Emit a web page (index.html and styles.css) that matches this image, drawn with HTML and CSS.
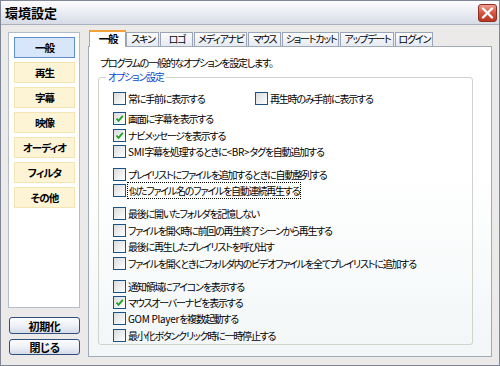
FILE: index.html
```html
<!DOCTYPE html>
<html lang="ja">
<head>
<meta charset="utf-8">
<title>環境設定</title>
<link rel="stylesheet" href="styles.css">
</head>
<body>
<div class="window">
  <div class="titlebar">
    <span class="title">環境設定</span>
    <span class="close"><svg width="13" height="12" viewBox="0 0 13 12"><path d="M2 1.5 L11 10.5 M11 1.5 L2 10.5" stroke="#fff" stroke-width="2.4" stroke-linecap="round"/></svg></span>
  </div>
  <div class="body">
    <div class="side">
      <div class="menu">
        <div class="mbtn active">一般</div>
        <div class="mbtn">再生</div>
        <div class="mbtn">字幕</div>
        <div class="mbtn">映像</div>
        <div class="mbtn">オーディオ</div>
        <div class="mbtn">フィルタ</div>
        <div class="mbtn">その他</div>
      </div>
      <button class="btn btn-init">初期化</button>
      <button class="btn btn-close">閉じる</button>
    </div>
    <div class="main">
      <div class="tabs">
        <div class="tab active">一般</div>
        <div class="tab">スキン</div>
        <div class="tab">ロゴ</div>
        <div class="tab">メディアナビ</div>
        <div class="tab">マウス</div>
        <div class="tab">ショートカット</div>
        <div class="tab">アップデート</div>
        <div class="tab">ログイン</div>
      </div>
      <div class="panel">
        <p class="desc">プログラムの一般的なオプションを設定します。</p>
        <fieldset class="group">
          <legend>オプション設定</legend>
          <div class="sec">
            <div class="row">
              <label class="item wide"><span class="cb"></span><span>常に手前に表示する</span></label>
              <label class="item"><span class="cb"></span><span>再生時のみ手前に表示する</span></label>
            </div>
          </div>
          <div class="sec first-gap">
            <div class="row"><label class="item"><span class="cb on"><svg viewBox="0 0 11 11"><path d="M2.5 5.5 L4.5 7.8 L8.8 2.8" fill="none" stroke="#21a121" stroke-width="1.8"/></svg></span><span>画面に字幕を表示する</span></label></div>
            <div class="row"><label class="item"><span class="cb on"><svg viewBox="0 0 11 11"><path d="M2.5 5.5 L4.5 7.8 L8.8 2.8" fill="none" stroke="#21a121" stroke-width="1.8"/></svg></span><span>ナビメッセージを表示する</span></label></div>
            <div class="row"><label class="item"><span class="cb"></span><span><span class="lat">SMI</span>字幕を処理するときに<span class="lat">&lt;BR&gt;</span>タグを自動追加する</span></label></div>
          </div>
          <div class="sec">
            <div class="row"><label class="item"><span class="cb"></span><span>プレイリストにファイルを追加するときに自動整列する</span></label></div>
            <div class="row"><label class="item"><span class="cb"></span><span class="focus">似たファイル名のファイルを自動連続再生する</span></label></div>
          </div>
          <div class="sec">
            <div class="row"><label class="item"><span class="cb"></span><span>最後に開いたフォルダを記憶しない</span></label></div>
            <div class="row"><label class="item"><span class="cb"></span><span>ファイルを開く時に前回の再生終了シーンから再生する</span></label></div>
            <div class="row"><label class="item"><span class="cb"></span><span>最後に再生したプレイリストを呼び出す</span></label></div>
            <div class="row"><label class="item"><span class="cb"></span><span>ファイルを開くときにフォルダ内のビデオファイルを全てプレイリストに追加する</span></label></div>
          </div>
          <div class="sec">
            <div class="row"><label class="item"><span class="cb"></span><span>通知領域にアイコンを表示する</span></label></div>
            <div class="row"><label class="item"><span class="cb on"><svg viewBox="0 0 11 11"><path d="M2.5 5.5 L4.5 7.8 L8.8 2.8" fill="none" stroke="#21a121" stroke-width="1.8"/></svg></span><span>マウスオーバーナビを表示する</span></label></div>
            <div class="row"><label class="item"><span class="cb"></span><span><span class="lat">GOM Player</span>を複数起動する</span></label></div>
            <div class="row"><label class="item"><span class="cb"></span><span>最小化ボタンクリック時に一時停止する</span></label></div>
          </div>
        </fieldset>
      </div>
    </div>
  </div>
</div>
</body>
</html>
```

FILE: styles.css
```css
* { box-sizing: border-box; margin: 0; padding: 0; }
html, body { width: 500px; height: 366px; overflow: hidden; }
body {
  font-family: "Noto Sans CJK JP", "Noto Sans", sans-serif;
  font-size: 10px;
  letter-spacing: -1.2px;
  color: #000;
  font-feature-settings: "palt";
  background: #eceae8;
}
.window {
  width: 500px;
  height: 366px;
  border: 1px solid #7f8796;
  background: #eceae8;
  display: flex;
  flex-direction: column;
}
.titlebar {
  height: 24px;
  flex: none;
  display: flex;
  align-items: center;
  justify-content: space-between;
  padding: 0 2px 0 4px;
  background: linear-gradient(#fdfdfe, #eceef4 45%, #d6dbe6);
  border-bottom: 1px solid #a9b0be;
}
.title { font-weight: 700; font-size: 13px; line-height: 16px; letter-spacing: 0; }
.close {
  width: 19px;
  height: 18px;
  border-radius: 3px;
  border: 1px solid #8e2d22;
  background: linear-gradient(#eea193, #d4553f 50%, #bb3422);
  display: flex;
  align-items: center;
  justify-content: center;
}
.body {
  flex: 1;
  display: flex;
  gap: 8px;
  padding: 5px 7px 8px 7px;
}
.side {
  width: 72px;
  flex: none;
  display: flex;
  flex-direction: column;
  padding-top: 2px;
}
.menu {
  height: 276px;
  background: #fff;
  border: 1px solid #b4bdca;
  padding: 4px 4px 0 5px;
  display: flex;
  flex-direction: column;
  gap: 4px;
}
.mbtn {
  height: 21px;
  line-height: 19px;
  text-align: center;
  font-weight: 700;
  font-size: 10.5px;
  letter-spacing: -0.9px;
  background: #fdf4d6;
  border: 1px solid #f3e4b3;
}
.mbtn.active {
  background: #d7e6f8;
  border: 1px solid #5f8fcf;
}
.btn {
  font: inherit;
  font-size: 11px;
  font-weight: 700;
  letter-spacing: -0.3px;
  width: 71px;
  margin-left: 1px;
  border: 1px solid #2f4f80;
  border-radius: 3px;
  background: linear-gradient(#fdfdfe, #eef1f7 50%, #d3dbe8);
  color: #000;
  line-height: 14px;
}
.btn-init { height: 17px; margin-top: 9px; }
.btn-close { height: 16px; margin-top: 5px; }
.main {
  flex: 1;
  display: flex;
  flex-direction: column;
}
.tabs {
  height: 16px;
  flex: none;
  display: flex;
  align-items: flex-end;
  gap: 1px;
  padding-left: 1px;
  position: relative;
  z-index: 1;
}
.tab {
  height: 14px;
  min-width: 33px;
  text-align: center;
  line-height: 12px;
  padding: 0 2px 0 3px;
  border: 1px solid #9aa6b8;
  border-bottom: none;
  background: linear-gradient(#fbfbfc, #e6ebf1);
  white-space: nowrap;
}
.tab.active {
  height: 17px;
  min-width: 37px;
  margin-bottom: -1px;
  margin-right: -1px;
  background: #fff;
  border-top: 2px solid #f0a33a;
  font-weight: 700;
  font-size: 10.5px;
  line-height: 14px;
}
.panel {
  flex: 1;
  background: linear-gradient(#ffffff, #ffffff 40%, #f2f6f7);
  border: 1px solid #9ea9b9;
  padding: 9px 18px 0 9px;
}
.desc { line-height: 14px; padding-left: 2px; }
.group {
  border: 1px solid #d0d3cc;
  border-radius: 3px;
  height: 275px;
  padding: 6px 8px 0 14px;
}
.group legend {
  color: #0b46d0;
  margin-left: -7px;
  padding: 0 2px;
  line-height: 14px;
}
.sec { margin-top: 6.6px; }
.sec:first-of-type { margin-top: 0; }
.sec.first-gap { margin-top: 4.2px; }
.row { height: 16.4px; display: flex; align-items: center; }
.item { display: flex; align-items: center; white-space: nowrap; }
.item.wide { width: 142px; }
.cb {
  width: 13px;
  height: 13px;
  flex: none;
  border: 1px solid #1d5284;
  background: linear-gradient(135deg, #d9dbdc, #ffffff);
  margin-right: 2px;
  display: flex;
}
.cb svg { width: 11px; height: 11px; }
.lat { letter-spacing: -0.3px; }
.focus { outline: 1px dotted #000; outline-offset: 0; padding: 0 1px; }
```
